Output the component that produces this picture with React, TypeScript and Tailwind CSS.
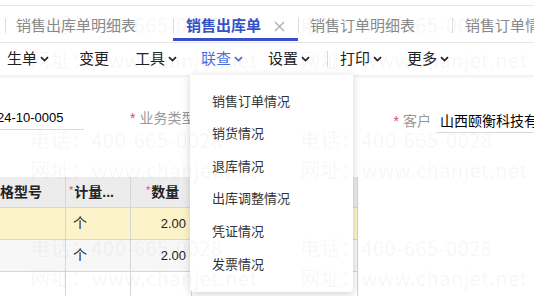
import React from "react";

const Chevron = ({ className = "" }: { className?: string }) => (
  <svg width="9" height="6" viewBox="0 0 9 6" className={className}>
    <path d="M1 1.2 L4.5 4.6 L8 1.2" fill="none" stroke="currentColor" strokeWidth="1.7" />
  </svg>
);

const toolbar = [
  { label: "生单", drop: true, ml: "ml-[7px]" },
  { label: "变更", drop: false, ml: "ml-[30px]" },
  { label: "工具", drop: true, ml: "ml-[26px]" },
  { label: "联查", drop: true, ml: "ml-[24px]", active: true },
  { label: "设置", drop: true, ml: "ml-[25px]" },
];

const menu = ["销售订单情况", "销货情况", "退库情况", "出库调整情况", "凭证情况", "发票情况"];

// watermark rows: [top margin, text]
const marks: [string, string][] = [
  ["mt-[13px]", "电话：400-665-0028"],
  ["mt-[11px]", "网址：www.chanjet.net"],
  ["mt-[56px]", "电话：400-665-0028"],
  ["mt-[6px]", "网址：www.chanjet.net"],
  ["mt-[54px]", "电话：400-665-0028"],
  ["mt-[6px]", "网址：www.chanjet.net"],
];

export default function App() {
  return (
    <div
      className="relative w-[534px] h-[296px] overflow-hidden bg-white text-[#222]"
      style={{ fontFamily: '"Liberation Sans", "Noto Sans CJK SC", sans-serif' }}
    >
      {/* Tabs */}
      <div className="mt-[5px] h-[38px] border-t border-b border-[#e6e6e6] flex items-stretch whitespace-nowrap">
        <div className="w-[5px] shrink-0" />
        <div className="relative w-[168px] shrink-0 flex items-center pl-[11px] pt-[4px] text-[15px] text-[#8a8a8a]">
          <span className="absolute left-0 top-[12px] h-[15px] w-px bg-[#dcdcdc]" />
          销售出库单明细表
        </div>
        <div className="relative w-[125px] shrink-0 flex items-center pl-[13px] pt-[4px] text-[15px] font-bold text-[#3553c7]">
          <span className="absolute left-0 top-[12px] h-[15px] w-px bg-[#dcdcdc]" />
          销售出库单
          <span className="ml-[13px] text-[#b0b0b0] font-normal">
            <svg width="11" height="11" viewBox="0 0 11 11">
              <path d="M1 1 L10 10 M10 1 L1 10" stroke="currentColor" strokeWidth="1.4" />
            </svg>
          </span>
          <span className="absolute left-0 right-0 bottom-[1px] h-[3px] bg-[#3a4fc4]" />
        </div>
        <div className="relative w-[154px] shrink-0 flex items-center pl-[12px] pt-[4px] text-[15px] text-[#8a8a8a]">
          <span className="absolute left-0 top-[12px] h-[15px] w-px bg-[#dcdcdc]" />
          销售订单明细表
        </div>
        <div className="relative flex-1 flex items-center pl-[13px] pt-[4px] text-[15px] text-[#8a8a8a] overflow-hidden">
          <span className="absolute left-0 top-[12px] h-[15px] w-px bg-[#dcdcdc]" />
          销售订单情况
        </div>
      </div>

      {/* Toolbar */}
      <div className="relative z-10 h-[32px] flex items-center text-[15px] bg-white shadow-[0_2px_3px_rgba(0,0,0,0.07)] whitespace-nowrap">
        {toolbar.map((t) => (
          <div
            key={t.label}
            className={`flex items-center gap-[3px] ${t.ml} ${t.active ? "text-[#4a6fe0]" : "text-[#222]"}`}
          >
            {t.label}
            {t.drop && <Chevron />}
          </div>
        ))}
        <span className="ml-[17px] h-[16px] w-px bg-[#d8d8d8]" />
        <div className="ml-[12px] flex items-center gap-[3px]">
          打印
          <Chevron />
        </div>
        <div className="ml-[25px] flex items-center gap-[3px]">
          更多
          <Chevron />
        </div>
      </div>

      {/* Form row */}
      <div className="h-[102px] relative text-[14px] whitespace-nowrap">
        <div className="flex items-start pt-[33px]">
          <div className="w-[84px] shrink-0 overflow-hidden border-b border-[#d9d9d9] h-[22px]">
            <span className="block -ml-[3px] text-[13px] text-black leading-[20px]">24-10-0005</span>
          </div>
          <div className="ml-[46px] shrink-0 flex items-center leading-[20px]">
            <span className="text-[#e8456b] mr-[4px]">*</span>
            <span className="text-[#999]">业务类型</span>
          </div>
          <div className="ml-[198px] shrink-0 pt-[3px] flex items-start leading-[20px]">
            <span className="text-[#e8456b] mr-[4px]">*</span>
            <span className="text-[#999]">客户</span>
            <span className="ml-[5px] border-b border-[#d9d9d9] pl-[4px] w-[120px] h-[22px] text-black">
              山西颐衡科技有限公司
            </span>
          </div>
        </div>
      </div>

      {/* Table */}
      <div className="w-[358px] border-r border-[#d6d6d6] text-[14px] whitespace-nowrap">
        <div className="flex h-[31px] bg-[#ececec] font-bold border-b border-[#d6d6d6]">
          <div className="w-[66px] border-r border-[#d6d6d6] flex items-center">格型号</div>
          <div className="w-[65px] border-r border-[#d6d6d6] flex items-center pl-[3px]">
            <span className="text-[#e8456b] font-normal text-[11px] mr-[1px] -mt-[4px]">*</span>计量...
          </div>
          <div className="w-[60px] flex items-center pl-[15px]">
            <span className="text-[#e8456b] font-normal text-[11px] mr-[1px] -mt-[4px]">*</span>数量
          </div>
          <div className="flex-1 border-l border-[#d6d6d6]" />
        </div>
        {["bg-[#fdf3cb]", "bg-[#f7f7f7]", "bg-white"].map((bg, i) => (
          <div key={i} className={`flex h-[32px] ${bg} border-b border-[#d6d6d6]`}>
            <div className="w-[66px] border-r border-[#d6d6d6]" />
            <div className="w-[65px] border-r border-[#d6d6d6] flex items-center pl-[7px]">{i < 2 ? "个" : ""}</div>
            <div className="w-[60px] flex items-center justify-end pr-[5px] text-[13px]">{i < 2 ? "2.00" : ""}</div>
            <div className="flex-1 border-l border-[#d6d6d6]" />
          </div>
        ))}
      </div>

      {/* Dropdown menu */}
      <div className="absolute z-20 left-[190px] top-[75px] w-[163px] h-[217px] bg-white rounded-b-[4px] shadow-[0_2px_8px_rgba(0,0,0,0.18)] pt-[10px]">
        {menu.map((m) => (
          <div key={m} className="h-[32.6px] flex items-center pl-[22px] text-[13px] text-[#333]">
            {m}
          </div>
        ))}
      </div>

      {/* Watermark */}
      <div
        className="absolute inset-0 z-30 pointer-events-none flex flex-col pl-[30px] text-[20px] tracking-[0.5px] text-black/[0.05] whitespace-nowrap"
        style={{ fontFamily: '"Noto Sans CJK SC", sans-serif' }}
      >
        {marks.map(([mt, t], i) => (
          <div key={i} className={`${mt} h-[24px] leading-[24px] flex`}>
            <span className="w-[270px] shrink-0">{t}</span>
            <span className="w-[270px] shrink-0">{t}</span>
          </div>
        ))}
      </div>
    </div>
  );
}
